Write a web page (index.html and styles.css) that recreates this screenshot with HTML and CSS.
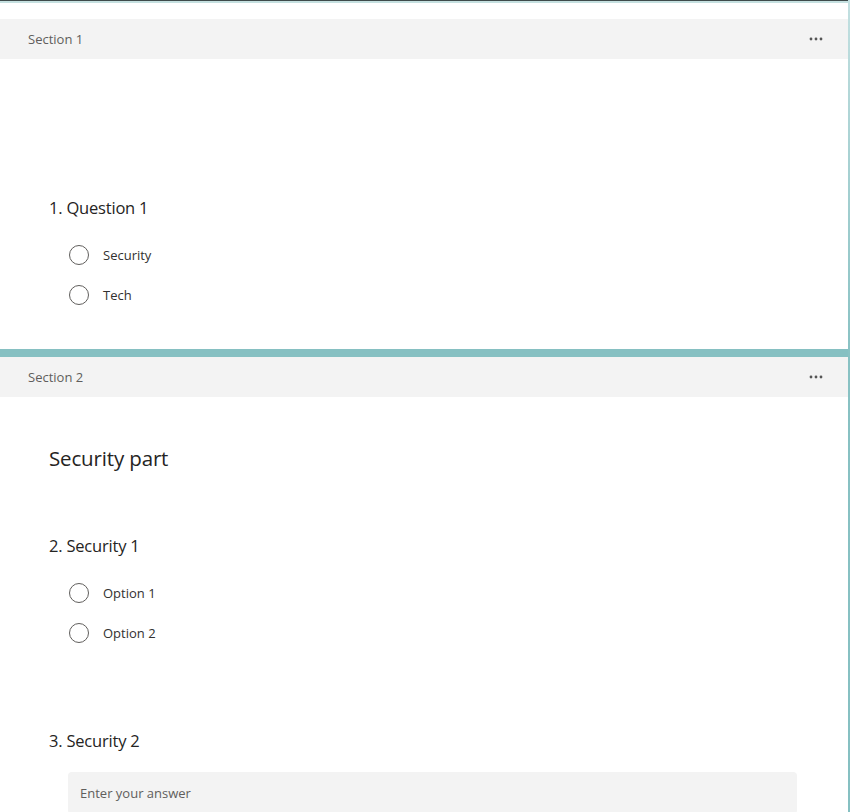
FILE: index.html
```html
<!DOCTYPE html>
<html>
<head>
<meta charset="utf-8">
<link rel="stylesheet" href="styles.css">
</head>
<body>
<div class="frame">
  <div class="topline"></div>
  <div class="page">
    <section class="section first">
      <div class="section-head">
        <span class="section-name">Section 1</span>
        <svg class="more" width="14" height="4" viewBox="0 0 14 4"><circle cx="2" cy="2" r="1.4"/><circle cx="7" cy="2" r="1.4"/><circle cx="12" cy="2" r="1.4"/></svg>
      </div>
      <div class="section-body body1">
        <div class="question">
          <div class="q-title">1. Question 1</div>
          <div class="options">
            <label class="option"><span class="radio"></span><span class="opt-text">Security</span></label>
            <label class="option"><span class="radio"></span><span class="opt-text">Tech</span></label>
          </div>
        </div>
      </div>
    </section>
    <div class="divider"></div>
    <section class="section">
      <div class="section-head">
        <span class="section-name">Section 2</span>
        <svg class="more" width="14" height="4" viewBox="0 0 14 4"><circle cx="2" cy="2" r="1.4"/><circle cx="7" cy="2" r="1.4"/><circle cx="12" cy="2" r="1.4"/></svg>
      </div>
      <div class="section-body body2">
        <div class="section-title">Security part</div>
        <div class="question q2">
          <div class="q-title">2. Security 1</div>
          <div class="options">
            <label class="option"><span class="radio"></span><span class="opt-text">Option 1</span></label>
            <label class="option"><span class="radio"></span><span class="opt-text">Option 2</span></label>
          </div>
        </div>
        <div class="question q3">
          <div class="q-title">3. Security 2</div>
          <div class="answer">Enter your answer</div>
        </div>
      </div>
    </section>
  </div>
</div>
</body>
</html>
```
FILE: styles.css
```css
* { box-sizing: border-box; }
html, body { margin: 0; padding: 0; background: #ffffff; }
body {
  font-family: "Open Sans", "Noto Sans", sans-serif;
  color: #323130;
  height: 812px;
  overflow: hidden;
}
.frame {
  width: 850px;
  min-height: 812px;
  border-right: 2px solid #8cc3c5;
  border-image: linear-gradient(to bottom, #c3e0e1 0px, #b5d8d9 80px, #88c1c3 360px, #86c0c2 100%) 1;
  border-image-width: 0 2px 0 0;
}
.topline {
  height: 3px;
  border-top: 1px solid #3f4b4b;
  background: #c5e0e0;
}
.page { padding-top: 16px; }
.section-head {
  height: 40px;
  background: #f3f3f3;
  display: flex;
  align-items: center;
  justify-content: space-between;
  padding: 0 25px 0 28px;
}
.section-name {
  font-size: 13px;
  color: #605e5c;
}
.more { fill: #555; display: block; }
.section-body { padding-left: 49px; }
.body1 { padding-top: 137px; padding-bottom: 34px; }
.body2 { padding-top: 47px; }
.q-title {
  font-size: 16.5px;
  line-height: 24px;
  color: #252423;
  letter-spacing: -0.2px;
}
.options {
  margin-top: 15px;
  padding-left: 20px;
  display: flex;
  flex-direction: column;
}
.option {
  height: 40px;
  display: flex;
  align-items: center;
}
.radio {
  width: 20px;
  height: 20px;
  border: 1px solid #605e5c;
  border-radius: 50%;
  flex: none;
}
.opt-text {
  margin-left: 14px;
  font-size: 13px;
  color: #323130;
}
.divider {
  height: 8px;
  background: #86c0c2;
}
.section-title {
  font-size: 20.5px;
  line-height: 28px;
  color: #252423;
  letter-spacing: -0.15px;
}
.q2 { margin-top: 62px; }
.q3 { margin-top: 76px; }
.answer {
  margin-top: 19px;
  margin-left: 19px;
  width: 729px;
  height: 42px;
  background: #f3f3f3;
  border-radius: 4px;
  padding-left: 12px;
  display: flex;
  align-items: center;
  font-size: 13px;
  color: #605e5c;
}
```
